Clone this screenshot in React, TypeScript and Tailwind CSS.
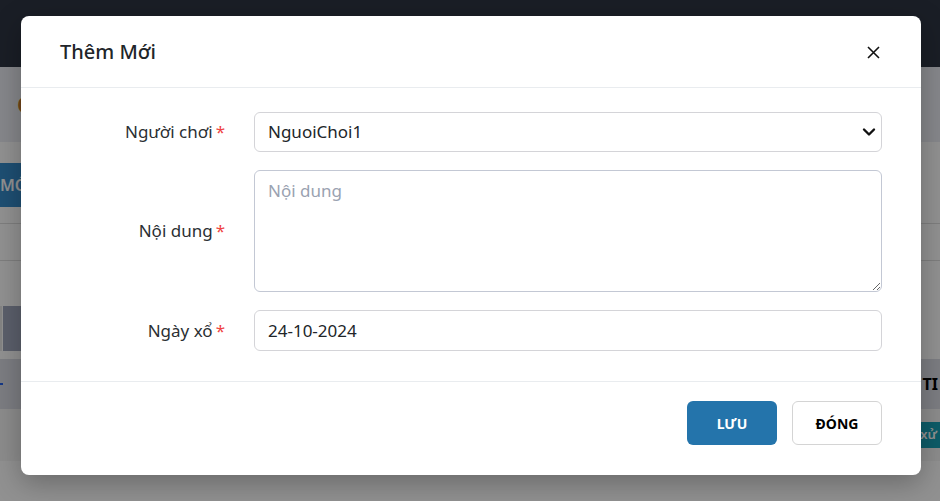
import { useState } from "react";

const font = { fontFamily: '"Noto Sans", "Open Sans", sans-serif' };

function RequiredLabel({ text }: { text: string }) {
  return (
    <label className="pr-[29px] text-right text-[17px] text-[#2b2f33]">
      {text}
      <span className="ml-[3px] text-[#ef4444]">*</span>
    </label>
  );
}

function BackgroundPage() {
  return (
    <div className="h-[501px] overflow-hidden bg-white">
      <div className="h-[67px] bg-[#2f3544]" />
      <div className="flex h-[75px] items-center bg-[#ebedf4] pl-[17px]">
        <span className="text-[22px] font-semibold text-[#c77a2c]">Q</span>
      </div>
      <div className="pt-[21px]">
        <div className="ml-[-70px] flex h-[44px] w-[120px] items-center justify-end bg-[#368bca] pr-[16px] text-[16px] font-semibold text-white">
          THÊM MỚI
        </div>
        <div className="mt-[16px] border-b border-[#dedede]" />
        <div className="mt-[36px] border-b border-[#dedede]" />
        <div className="mt-[45px] flex h-[45px] gap-[1px]">
          <div className="w-[2px] bg-[#e8e8e8]" />
          <div className="w-[60px] bg-[#a1a8bd]" />
        </div>
        <div className="mt-[8px] flex h-[50px] items-center justify-between bg-[#dadce4] pr-[2px]">
          <span className="h-[2px] w-[3px] bg-[#2563eb]" />
          <span className="flex items-center gap-[3px] text-[16px] font-bold text-black">
            <span className="h-[2px] w-[3px] bg-[#2563eb]" />
            TI
          </span>
        </div>
        <div className="flex h-[52px] items-center justify-end bg-[#f6f6f6]">
          <span className="rounded-l-[3px] bg-[#17a2b8] px-[3px] py-[3px] text-[13px] font-semibold text-white">
            xử
          </span>
        </div>
      </div>
    </div>
  );
}

export default function App() {
  const [player, setPlayer] = useState("NguoiChoi1");
  const [content, setContent] = useState("");

  return (
    <div className="relative h-[501px] w-[940px] overflow-hidden" style={font}>
      <BackgroundPage />
      <div className="absolute inset-0 bg-black/[0.43]" />

      <div className="absolute left-[21px] top-[16px] w-[900px] rounded-[8px] bg-white shadow-[0_8px_28px_rgba(0,0,0,0.28)]">
        <div className="flex h-[72px] items-center justify-between border-b border-[#e9ecef] pl-[39px] pr-[40px] pt-[1px]">
          <h2 className="text-[20px] font-medium text-[#212529]">Thêm Mới</h2>
          <button type="button" className="flex h-[16px] w-[16px] items-center justify-center text-[#111]">
            <svg width="13" height="13" viewBox="0 0 13 13" fill="none" stroke="currentColor" strokeWidth="1.6">
              <path d="M1 1 L12 12 M12 1 L1 12" />
            </svg>
          </button>
        </div>

        <div className="grid grid-cols-[193px_1fr] items-center gap-y-[18px] pb-[30px] pl-[40px] pr-[39px] pt-[24px]">
          <RequiredLabel text="Người chơi" />
          <div className="relative">
            <select
              value={player}
              onChange={(e) => setPlayer(e.target.value)}
              className="h-[40px] w-full appearance-none rounded-[6px] border border-[#d4d4d8] bg-white pl-[13px] text-[17px] text-[#212529] outline-none"
            >
              <option value="NguoiChoi1">NguoiChoi1</option>
              <option value="NguoiChoi2">NguoiChoi2</option>
            </select>
            <svg
              className="pointer-events-none absolute right-[6px] top-[15px]"
              width="14"
              height="10"
              viewBox="0 0 14 10"
              fill="none"
              stroke="#111"
              strokeWidth="2.4"
              strokeLinecap="round"
              strokeLinejoin="round"
            >
              <path d="M2 2.5 L7 7.5 L12 2.5" />
            </svg>
          </div>

          <RequiredLabel text="Nội dung" />
          <textarea
            value={content}
            onChange={(e) => setContent(e.target.value)}
            placeholder="Nội dung"
            className="block h-[122px] w-full resize-y rounded-[6px] border border-[#c3c8d4] px-[13px] py-[7px] text-[17px] text-[#212529] outline-none placeholder:text-[#9aa2b1]"
          />

          <RequiredLabel text="Ngày xổ" />
          <input
            type="text"
            readOnly
            value="24-10-2024"
            className="h-[41px] w-full rounded-[6px] border border-[#d4d4d8] px-[13px] text-[17px] text-[#212529] outline-none"
          />
        </div>

        <div className="flex justify-end gap-[15px] border-t border-[#e9ecef] pb-[30px] pr-[39px] pt-[19px]">
          <button
            type="button"
            className="h-[44px] w-[90px] rounded-[6px] bg-[#2474ab] text-[14px] font-bold text-white"
          >
            LƯU
          </button>
          <button
            type="button"
            className="h-[44px] w-[90px] rounded-[6px] border border-[#d4d4d4] bg-white text-[14px] font-bold text-black"
          >
            ĐÓNG
          </button>
        </div>
      </div>
    </div>
  );
}
